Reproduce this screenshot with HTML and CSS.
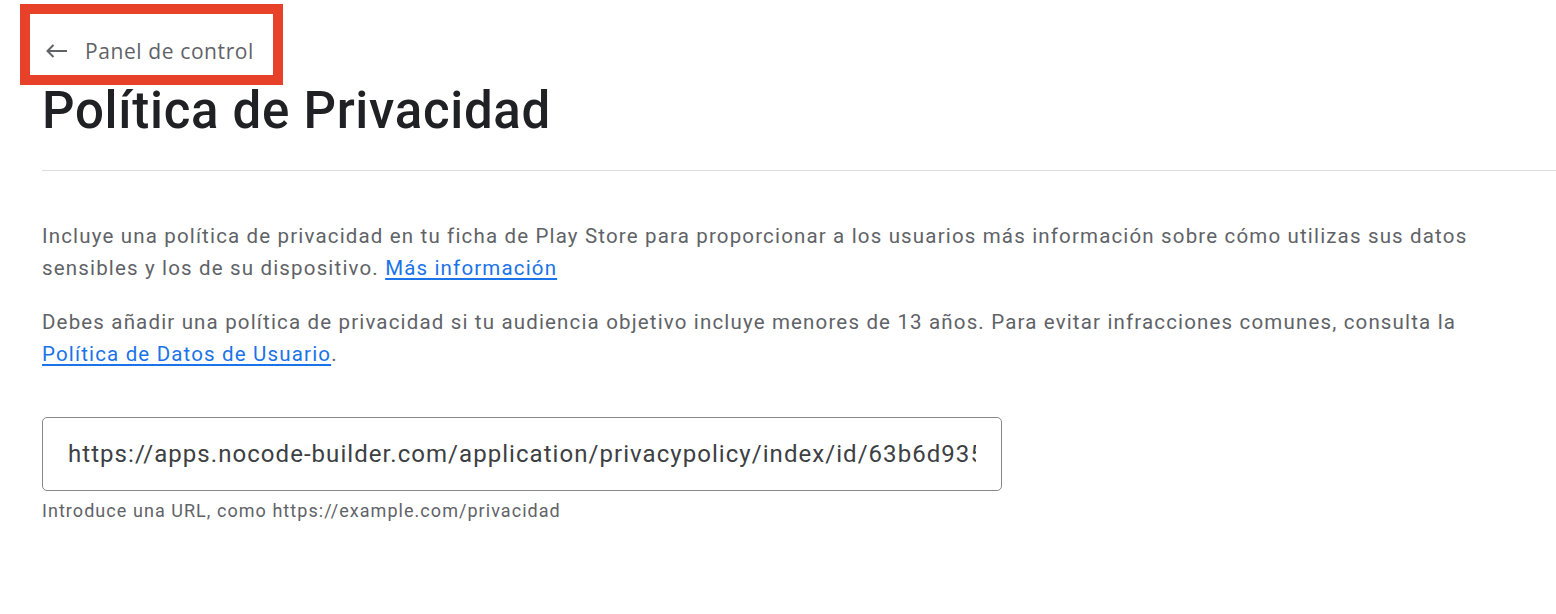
FILE: index.html
```html
<!DOCTYPE html>
<html lang="es">
<head>
<meta charset="utf-8">
<title>Política de Privacidad</title>
<link rel="stylesheet" href="styles.css">
</head>
<body>
<div class="page">
  <header class="header">
    <a class="back" href="#">
      <svg class="back-icon" viewBox="0 0 22 14" width="22" height="14" aria-hidden="true"><path d="M21 7H1.5M7.5 1L1.5 7l6 6"/></svg>
      <span>Panel de control</span>
    </a>
    <h1 class="title">Política de Privacidad</h1>
  </header>
  <hr class="divider">
  <main class="content">
    <p class="text">Incluye una política de privacidad en tu ficha de Play Store para proporcionar a los usuarios más información sobre cómo utilizas sus datos sensibles y los de su dispositivo. <a href="#" class="link">Más información</a></p>
    <p class="text">Debes añadir una política de privacidad si tu audiencia objetivo incluye menores de 13 años. Para evitar infracciones comunes, consulta la <a href="#" class="link">Política de Datos de Usuario</a>.</p>
    <div class="field">
      <input class="url-input" type="text" value="https://apps.nocode-builder.com/application/privacypolicy/index/id/63b6d9353a1f0c2e8d7b4a21">
      <div class="hint">Introduce una URL, como https://example.com/privacidad</div>
    </div>
  </main>
  <div class="highlight"></div>
</div>
</body>
</html>
```
FILE: styles.css
```css
* { box-sizing: border-box; }
html, body { margin: 0; padding: 0; background: #fff; }
body { font-family: Roboto, "Noto Sans", Arial, sans-serif; }
.page { position: relative; width: 1556px; height: 614px; overflow: hidden; }
.header { padding: 36px 0 0 42px; }
.back { display: flex; align-items: center; gap: 17px; height: 30px; padding-left: 4px; color: #5f6368; text-decoration: none; font-family: "Open Sans", Roboto, sans-serif; font-size: 21px; letter-spacing: 0.6px; }
.back-icon { fill: none; stroke: #5f6368; stroke-width: 2; flex: none; }
.title { margin: 15px 0 0; font-family: Roboto, sans-serif; font-weight: 500; font-size: 51px; line-height: 60px; letter-spacing: 0.7px; color: #202124; }
.divider { margin: 29px 0 0 42px; border: 0; border-top: 1px solid #dadce0; height: 0; }
.content { padding: 49px 0 0 42px; }
.text { margin: 0 0 22px; font-size: 20.5px; line-height: 32px; letter-spacing: 1.16px; color: #5f6368; max-width: 1450px; }
.link { color: #1a73e8; text-decoration: underline; text-underline-offset: 3px; }
.field { margin-top: 47px; }
.url-input { display: block; width: 960px; height: 74px; padding: 0 25px; border: 1px solid #86888c; border-radius: 5px; font-family: Roboto, sans-serif; font-size: 24px; letter-spacing: 1.05px; color: #3c4043; background: #fff; outline: none; }
.hint { margin-top: 10px; font-size: 18px; line-height: 20px; letter-spacing: 1.05px; color: #5f6368; }
.highlight { position: absolute; left: 20px; top: 4px; width: 263px; height: 81px; border: 10px solid #e8412a; pointer-events: none; }
```
